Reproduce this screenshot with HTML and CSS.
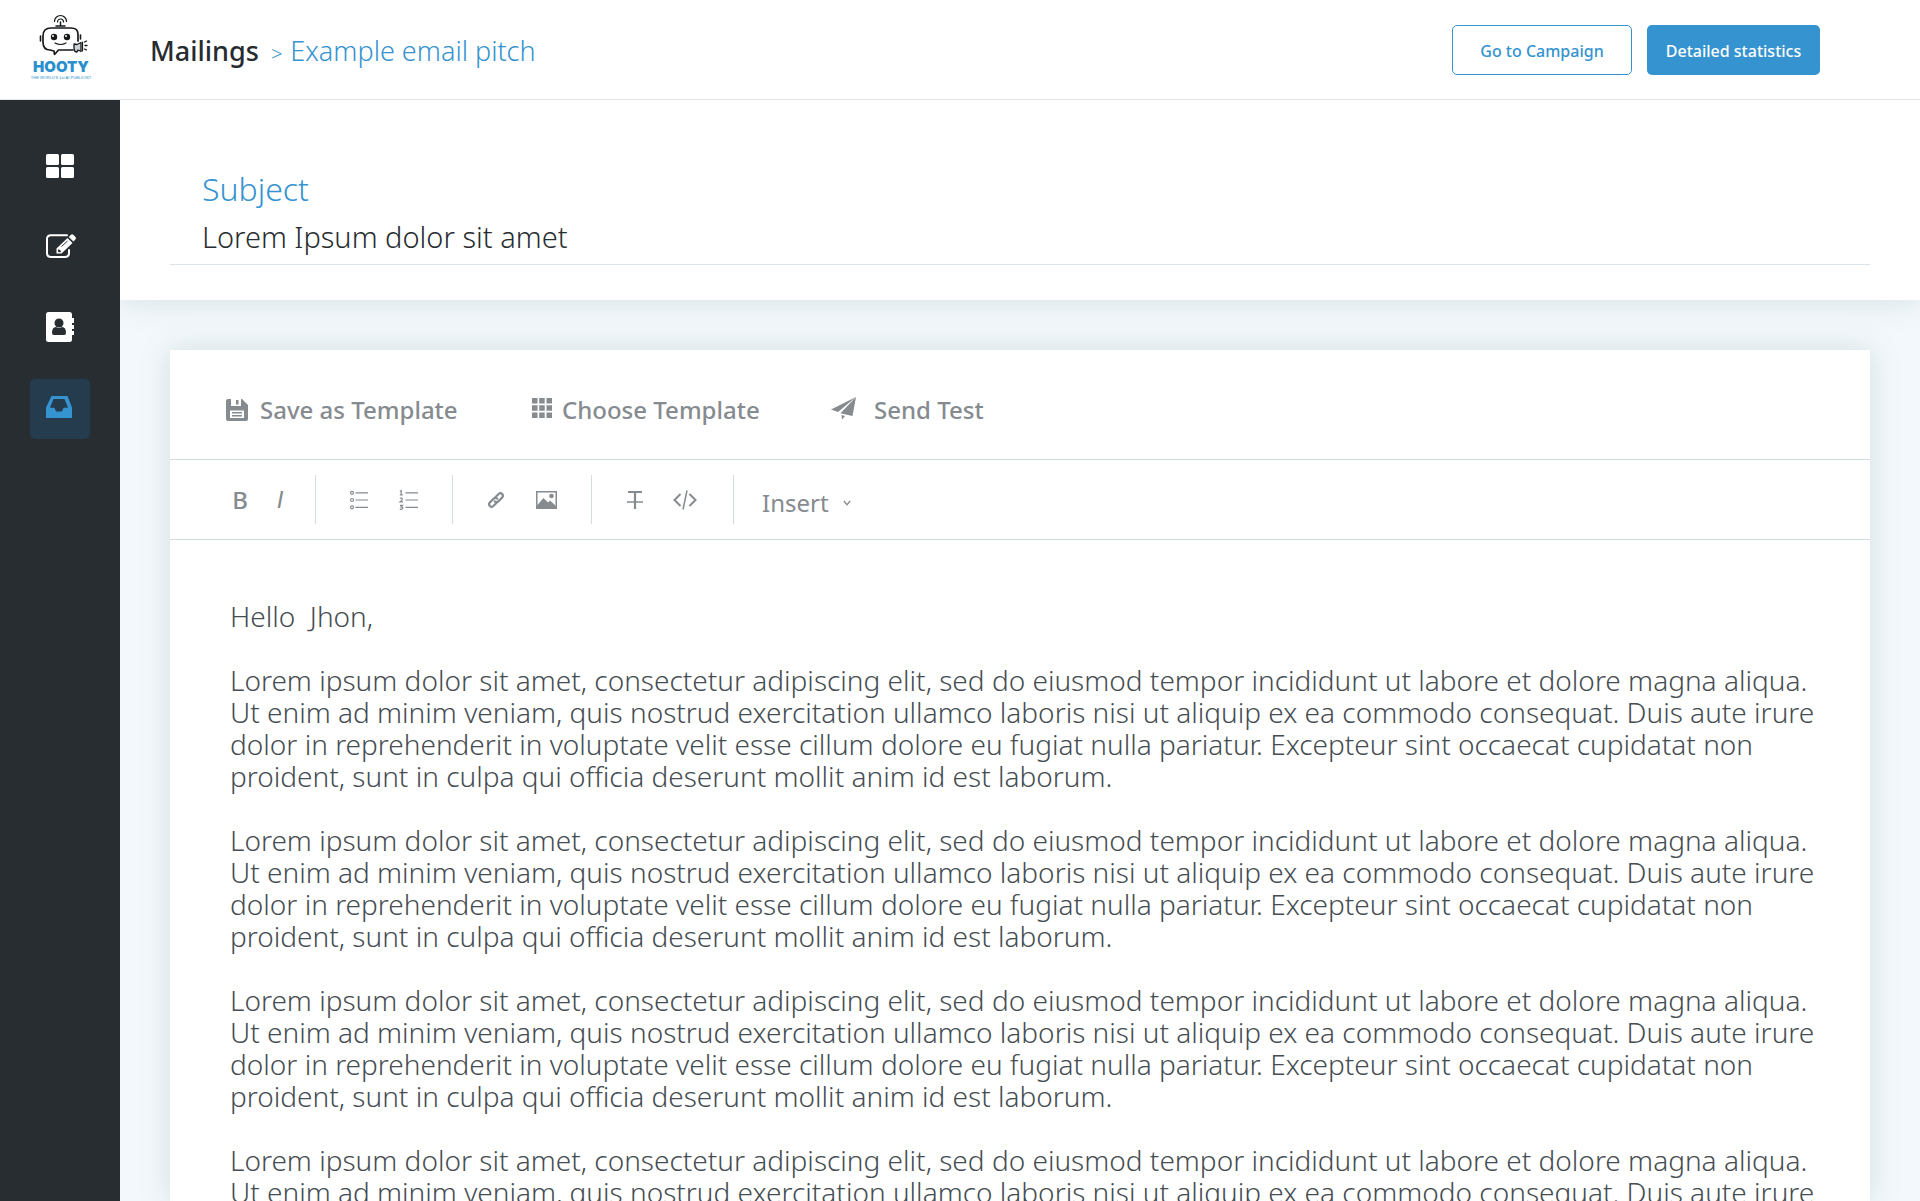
FILE: index.html
```html
<!DOCTYPE html>
<html lang="en">
<head>
<meta charset="utf-8">
<title>Mailings</title>
<link rel="stylesheet" href="styles.css">
</head>
<body>
<div class="app">
  <header class="topbar">
    <a class="logo" href="#" aria-label="Hooty">
      <svg width="60" height="76" viewBox="0 0 60 76">
        <g fill="none" stroke="#17191b" stroke-linecap="round" stroke-linejoin="round">
          <path d="M24.500 9.500a6 6 0 0 1 12 0M27.500 10a3 3 0 0 1 6 0" stroke-width="1.200"/>
          <path d="M26 14h9M30.500 10v4" stroke-width="1.500"/>
          <path d="M48 29V22q0-6-7-6H21q-8 0-8 8v6q0 8 7 8l4 1 .5 3.500L28.500 38H43" stroke-width="1.700"/>
          <path d="M10.500 24v5M50.500 23v4" stroke-width="1.600"/>
          <path d="M25 31q5.500 3 11 0" stroke-width="1.200"/>
          <path d="M54.500 30l2-1M55 33.500h2M54.500 37l2 1" stroke-width="1.300"/>
          <path d="M44 32l3 .5 4-2v9l-3-1.500-1 2-2-.5-1-3z" stroke-width="1.300" fill="#cfd2d4"/>
          <path d="M52.500 30v9" stroke-width="1.200"/>
        </g>
        <circle cx="24" cy="25" r="3.200" fill="#17191b"/><circle cx="37" cy="25" r="3.200" fill="#17191b"/>
        <circle cx="23" cy="24" r="1" fill="#fff"/><circle cx="36" cy="24" r="1" fill="#fff"/>
        <text class="logo-name" x="31" y="60" text-anchor="middle">HOOTY</text>
        <text class="logo-tag" x="31" y="67" text-anchor="middle">THE WORLD'S 1st AI PUBLICIST</text>
      </svg>
    </a>
    <nav class="crumbs" aria-label="Breadcrumb">
      <h1 class="crumb-root">Mailings</h1>
      <span class="crumb-sep">&gt;</span>
      <a class="crumb-here" href="#">Example email pitch</a>
    </nav>
    <div class="actions">
      <button class="btn btn-outline" type="button">Go to Campaign</button>
      <button class="btn btn-solid" type="button">Detailed statistics</button>
    </div>
  </header>

  <nav class="sidebar" aria-label="Main">
    <a class="side-link" href="#" aria-label="Dashboard">
      <svg width="28" height="24" viewBox="0 0 28 24" fill="#fff"><rect width="13" height="11" rx="1.500"/><rect x="15" width="13" height="11" rx="1.500"/><rect y="13" width="13" height="11" rx="1.500"/><rect x="15" y="13" width="13" height="11" rx="1.500"/></svg>
    </a>
    <a class="side-link" href="#" aria-label="Compose">
      <svg width="30" height="24" viewBox="-1 1 30 24"><path d="M21 1.200H5Q1 1.200 1 5v14q0 4 4 4h14q4 0 4-4v-3" fill="none" stroke="#fff" stroke-width="2" stroke-linecap="round"/><path d="M10.500 14.500 21.500 4l5 5-11 10.500h-5z" fill="#fff"/><path d="M22.700 3 25 .7q1-1 2.200 0l2.300 2.300q1 1.200 0 2.200L27.500 7.500z" fill="#fff"/><path d="M15.500 12.500l6-5.500" stroke="#282d31" stroke-width="1"/><path d="M12.800 15l2.500 2.500-1.200.8h-1.300l-.8-.8v-1.300z" fill="#282d31"/></svg>
    </a>
    <a class="side-link" href="#" aria-label="Contacts">
      <svg width="28" height="30" viewBox="0 1 28 30"><path d="M2.500 0h21Q26 0 26 2.500V6h2v5h-2v2h2v4h-2v2h2v4h-2v4.500q0 2.500-2.500 2.500h-21Q0 30 0 27.500v-25Q0 0 2.500 0z" fill="#fff"/><circle cx="13" cy="11" r="4.500" fill="#282d31"/><path d="M6 21q0-6 4-6 3 2 6 0 4 0 4 6 0 2-2 2H8q-2 0-2-2z" fill="#282d31"/></svg>
    </a>
    <a class="side-link is-active" href="#" aria-label="Inbox" aria-current="page">
      <svg width="28" height="24" viewBox="0 2 28 24"><path fill="#3593d0" fill-rule="evenodd" d="M5.500 1h16L26 12.500V23H0V12.500zM7.500 4 4 12.800h4.500L10 16.500h6l1.500-3.700H22L18.500 4z"/></svg>
    </a>
  </nav>

  <main class="main">
    <section class="subject">
      <div class="subject-field">
        <label class="subject-label" for="subject">Subject</label>
        <input class="subject-input" id="subject" type="text" value="Lorem Ipsum dolor sit amet">
      </div>
    </section>

    <section class="editor">
      <div class="template-bar">
        <button class="tpl-btn" type="button">
          <svg width="22" height="22" viewBox="0 0 22 22"><path fill="#858b8f" fill-rule="evenodd" d="M2 0H5v7h10V0h1l6 6v14q0 2-2 2H2q-2 0-2-2V2Q0 0 2 0zM4 11.500v7.500h14v-7.500z"/><path fill="#858b8f" d="M10 1h2.500v4.500H10zM6 13h10v1.500H6zM6 16h10v1.500H6z"/></svg>
          <span>Save as Template</span>
        </button>
        <button class="tpl-btn tpl-choose" type="button">
          <svg width="20" height="24" viewBox="0 0 20 24" fill="#858b8f"><path d="M0 0h5.500v5.500H0zM7.200 0h5.500v5.500H7.200zM14.500 0H20v5.500h-5.500zM0 7.200h5.500v5.500H0zM7.200 7.200h5.500v5.500H7.200zM14.500 7.200H20v5.500h-5.500zM0 14.500h5.500V20H0zM7.200 14.500h5.500V20H7.200zM14.500 14.500H20V20h-5.500z"/></svg>
          <span>Choose Template</span>
        </button>
        <button class="tpl-btn tpl-send" type="button">
          <svg width="25" height="26" viewBox="0 0 25 26" fill="#858b8f"><path d="M25 0 0 12.500l7 2.500zM25 0 9.500 16.300 21.500 19zM10.500 18l3.500 1-3 3.500z"/></svg>
          <span>Send Test</span>
        </button>
      </div>

      <div class="format-bar" role="toolbar" aria-label="Formatting">
        <div class="group group-first">
          <button class="tool tool-text" type="button" aria-label="Bold">B</button>
          <button class="tool tool-text tool-italic" type="button" aria-label="Italic">I</button>
        </div>
        <div class="group">
          <button class="tool" type="button" aria-label="Bulleted list">
            <svg width="20" height="20" viewBox="0 0 20 20" fill="none" stroke="#858b8f" stroke-width="1.200"><circle cx="3" cy="2.800" r="1.500"/><circle cx="3" cy="10" r="1.500"/><circle cx="3" cy="17.300" r="1.500"/><path d="M6.500 2.800H19M6.500 10H19M6.500 17.300H19"/></svg>
          </button>
          <button class="tool" type="button" aria-label="Numbered list">
            <svg width="20" height="20" viewBox="0 0 20 20" fill="none" stroke="#858b8f" stroke-width="1.200"><path d="M.8 1.200 2.200.6v4M.8 4.800h3M.9 8.400q2.500-1 2.500.5 0 1-2.400 3H4M1 15.300h2.500L2 17q1.800 0 1.700 1.300-.5 1.400-2.900.8M6.500 2.800H19M6.500 10H19M6.500 17.300H19"/></svg>
          </button>
        </div>
        <div class="group">
          <button class="tool" type="button" aria-label="Link">
            <svg width="18" height="18" viewBox="0 0 18 18" fill="none" stroke="#858b8f" stroke-width="2.200" stroke-linecap="round"><path d="M7.300 7.300 11.600 3q1.900-1.700 3.600 0 1.500 1.700 0 3.500L11.300 10.400q-1.800 1.400-3.500 0M10.700 10.700 6.400 15q-1.900 1.700-3.600 0-1.500-1.700 0-3.500L6.700 7.600q1.800-1.400 3.500 0"/></svg>
          </button>
          <button class="tool" type="button" aria-label="Image">
            <svg width="21" height="18" viewBox="0 0 21 18"><rect x=".75" y=".75" width="19.500" height="16.500" fill="none" stroke="#858b8f" stroke-width="1.500"/><path d="M1 14.500 7.500 7l4.500 4.500 2-2L20 15v2.500H1z" fill="#858b8f"/><circle cx="15.500" cy="5" r="2.300" fill="#858b8f"/></svg>
          </button>
        </div>
        <div class="group">
          <button class="tool" type="button" aria-label="Clear formatting">
            <svg width="16" height="18" viewBox="0 0 16 18" fill="none" stroke="#858b8f"><path d="M1 1h14" stroke-width="2"/><path d="M8 1v17" stroke-width="2.200"/><path d="M0 11h16" stroke-width="1.500"/></svg>
          </button>
          <button class="tool" type="button" aria-label="Code">
            <svg width="24" height="20" viewBox="0 0 24 20" fill="none" stroke="#858b8f" stroke-width="2"><path d="M7.500 4 1.500 10l6 6M16.500 4l6 6-6 6"/><path d="M14 .5 10 19.500" stroke-width="1.500"/></svg>
          </button>
        </div>
        <div class="insert">
          <select class="insert-select" aria-label="Insert"><option>Insert</option></select>
          <svg width="8" height="6" viewBox="0 0 8 6" fill="none" stroke="#858b8f" stroke-width="1.300"><path d="M.8 1 4 4.700 7.200 1"/></svg>
        </div>
      </div>

      <div class="letter" contenteditable="true" role="textbox" aria-label="Message" spellcheck="false">
        <p class="greeting">Hello  Jhon,</p>
        <p>Lorem ipsum dolor sit amet, consectetur adipiscing elit, sed do eiusmod tempor incididunt ut labore et dolore magna aliqua. Ut enim ad minim veniam, quis nostrud exercitation ullamco laboris nisi ut aliquip ex ea commodo consequat. Duis aute irure dolor in reprehenderit in voluptate velit esse cillum dolore eu fugiat nulla pariatur. Excepteur sint occaecat cupidatat non proident, sunt in culpa qui officia deserunt mollit anim id est laborum.</p>
        <p>Lorem ipsum dolor sit amet, consectetur adipiscing elit, sed do eiusmod tempor incididunt ut labore et dolore magna aliqua. Ut enim ad minim veniam, quis nostrud exercitation ullamco laboris nisi ut aliquip ex ea commodo consequat. Duis aute irure dolor in reprehenderit in voluptate velit esse cillum dolore eu fugiat nulla pariatur. Excepteur sint occaecat cupidatat non proident, sunt in culpa qui officia deserunt mollit anim id est laborum.</p>
        <p>Lorem ipsum dolor sit amet, consectetur adipiscing elit, sed do eiusmod tempor incididunt ut labore et dolore magna aliqua. Ut enim ad minim veniam, quis nostrud exercitation ullamco laboris nisi ut aliquip ex ea commodo consequat. Duis aute irure dolor in reprehenderit in voluptate velit esse cillum dolore eu fugiat nulla pariatur. Excepteur sint occaecat cupidatat non proident, sunt in culpa qui officia deserunt mollit anim id est laborum.</p>
        <p>Lorem ipsum dolor sit amet, consectetur adipiscing elit, sed do eiusmod tempor incididunt ut labore et dolore magna aliqua. Ut enim ad minim veniam, quis nostrud exercitation ullamco laboris nisi ut aliquip ex ea commodo consequat. Duis aute irure</p>
      </div>
    </section>
  </main>
</div>
</body>
</html>
```
FILE: styles.css
```css
* { box-sizing: border-box; }

body {
  margin: 0;
  font-family: "Noto Sans", "Open Sans", sans-serif;
  color: #272c30;
  background: #f3f8fc;
}

h1, p { margin: 0; }
a { text-decoration: none; }
svg { display: block; flex: none; overflow: visible; }

button, input, select {
  font: inherit;
  color: inherit;
  border: 0;
  padding: 0;
  background: none;
}

button { cursor: pointer; }

.app {
  display: grid;
  grid-template-columns: 120px minmax(0, 1fr);
  grid-template-rows: 100px minmax(0, 1fr);
  height: 100vh;
  overflow: hidden;
}

/* Top bar */
.topbar {
  grid-column: 1 / -1;
  display: flex;
  align-items: center;
  padding-right: 100px;
  background: #fff;
  border-bottom: 1px solid #e4e5ea;
}

.logo {
  display: flex;
  justify-content: center;
  width: 120px;
}

.logo-name {
  font: 900 15px Inter, sans-serif;
  fill: #2b8fce;
}

.logo-tag {
  font: 400 4px "Liberation Sans", sans-serif;
  fill: #2b8fce;
}

.crumbs {
  display: flex;
  align-items: baseline;
  flex: 1;
  padding: 6px 30px 0;
  font-size: 27px;
  line-height: 36px;
  font-weight: 300;
  color: #3593d0;
}

.crumb-root {
  margin-right: 12px;
  font-size: 27px;
  font-weight: 500;
  color: #272c30;
}

.crumb-sep {
  margin-right: 8px;
  font-size: 20px;
}

.crumb-here { color: inherit; }

.actions {
  display: flex;
  gap: 15px;
}

.btn {
  height: 50px;
  padding-top: 2px;
  border-radius: 5px;
  font-size: 16px;
  font-weight: 500;
}

.btn-outline {
  width: 180px;
  border: 1px solid #3593d0;
  color: #3593d0;
}

.btn-solid {
  width: 173px;
  background: #3593d0;
  color: #fff;
}

/* Sidebar */
.sidebar {
  display: flex;
  flex-direction: column;
  align-items: center;
  gap: 21px;
  padding-top: 36px;
  background: #282d31;
}

.side-link {
  display: grid;
  place-items: center;
  width: 60px;
  height: 60px;
  border-radius: 5px;
}

.side-link.is-active { background: #243c4d; }

/* Main column */
.main {
  display: flex;
  flex-direction: column;
  min-height: 0;
  overflow: hidden;
}

.subject {
  flex: none;
  height: 200px;
  padding: 70px 50px 0;
  background: #fff;
  box-shadow: 0 0 30px rgba(90, 125, 120, 0.2);
}

.subject-field {
  padding: 0 32px 6px;
  border-bottom: 1px solid #dce5ec;
}

.subject-label,
.subject-input {
  display: block;
  width: 100%;
  height: 44px;
  line-height: 40px;
  font-size: 29px;
  font-weight: 300;
}

.subject-label {
  font-size: 32px;
  line-height: 38px;
  color: #3593d0;
}

/* Editor card */
.editor {
  flex: 1;
  display: flex;
  flex-direction: column;
  min-height: 0;
  margin: 50px 50px 0;
  background: #fff;
  box-shadow: 0 0 30px rgba(90, 125, 120, 0.2);
}

.template-bar {
  flex: none;
  display: grid;
  grid-template-columns: 306px 299px auto;
  justify-content: start;
  height: 110px;
  padding: 10px 56px 0;
  border-bottom: 1px solid #d3dde0;
  font-size: 24px;
  font-weight: 500;
  color: #858b8f;
}

.tpl-btn {
  display: flex;
  align-items: center;
  gap: 12px;
  white-space: nowrap;
}

.tpl-choose { gap: 10px; }
.tpl-send { gap: 18px; }

.format-bar {
  flex: none;
  display: grid;
  grid-template-columns: 96px 137px 139px 142px auto;
  justify-content: start;
  align-items: center;
  height: 80px;
  padding: 0 50px;
  border-bottom: 1px solid #d3dde0;
  color: #858b8f;
}

.group {
  display: flex;
  align-items: center;
  height: 49px;
  padding-left: 18px;
  border-right: 1px solid #d3dde0;
}

.group-first { padding-left: 0; }

.tool {
  display: grid;
  place-items: center;
  width: 50px;
  height: 40px;
}

.tool-text {
  width: 40px;
  font-size: 24px;
  font-weight: 500;
}

.tool-italic {
  font-family: "Liberation Sans", sans-serif;
  font-style: italic;
}

.insert {
  display: flex;
  align-items: center;
  gap: 14px;
  padding: 6px 0 0 28px;
}

.insert-select {
  appearance: none;
  height: 36px;
  font-size: 24px;
  font-weight: 400;
}

.letter {
  flex: 1;
  min-height: 0;
  overflow: hidden;
  padding: 60px 44px 0 60px;
  outline: 0;
  font-size: 28px;
  line-height: 32px;
  font-weight: 300;
  color: #454d52;
}

.letter p + p { margin-top: 32px; }

.greeting { white-space: pre-wrap; }
```
